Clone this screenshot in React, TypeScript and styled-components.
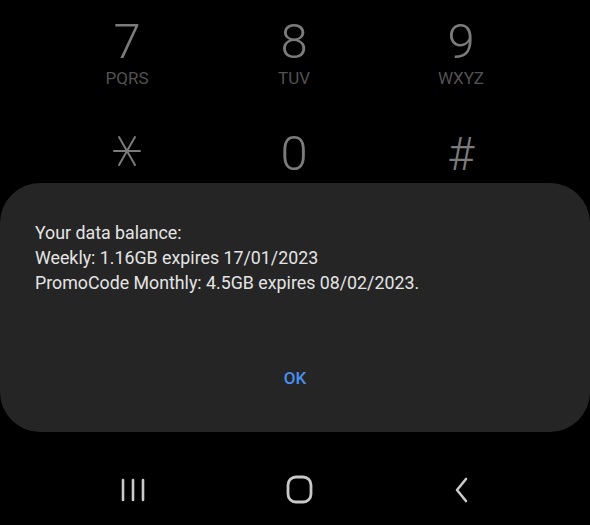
import React from "react";
import styled, { createGlobalStyle } from "styled-components";

const GlobalStyle = createGlobalStyle`
  html, body {
    margin: 0;
    padding: 0;
    background: #000;
  }
  body {
    font-family: Roboto, "Noto Sans", "Liberation Sans", sans-serif;
  }
`;

const Screen = styled.div`
  width: 590px;
  height: 525px;
  background: #000;
  display: flex;
  flex-direction: column;
  overflow: hidden;
`;

const Keypad = styled.div`
  height: 183px;
  display: grid;
  grid-template-columns: 254px 80px 254px;
  grid-template-rows: 112px 71px;
  overflow: hidden;
`;

const Key = styled.div`
  display: flex;
  flex-direction: column;
  align-items: center;
  padding-top: 17px;
`;

const Digit = styled.div`
  font-size: 49px;
  font-weight: 300;
  line-height: 50px;
  color: #7b7b7b;
`;

const Letters = styled.div`
  font-size: 17px;
  line-height: 18px;
  color: #525252;
  margin-top: 2px;
`;

const Symbol = styled.div`
  font-size: 46px;
  font-weight: 300;
  line-height: 50px;
  color: #7b7b7b;
`;

const Dialog = styled.div`
  height: 249px;
  background: #252525;
  border-radius: 40px;
  display: flex;
  flex-direction: column;
  box-sizing: border-box;
  padding: 37px 35px 0;
`;

const Message = styled.div`
  color: #e4e4e4;
  font-size: 17.8px;
  line-height: 25px;
  height: 142px;
`;

const OkButton = styled.button`
  align-self: center;
  border: none;
  background: transparent;
  color: #4a8ff0;
  font-family: inherit;
  font-size: 17px;
  font-weight: 500;
  padding: 6px 20px;
`;

const NavBar = styled.div`
  flex: 1;
  display: flex;
  align-items: center;
  justify-content: space-between;
  padding: 22px 118px 0 120px;
`;

const NavIcon = styled.svg`
  display: block;
`;

const Cell = styled.div`
  display: flex;
  justify-content: center;
`;

const keys = [
  { d: "7", l: "PQRS" },
  { d: "8", l: "TUV" },
  { d: "9", l: "WXYZ" },
];

export default function App() {
  return (
    <>
      <GlobalStyle />
      <Screen>
        <Keypad>
          {keys.map((k) => (
            <Cell key={k.d}>
              <Key>
                <Digit>{k.d}</Digit>
                <Letters>{k.l}</Letters>
              </Key>
            </Cell>
          ))}
          <Cell>
            <Key>
              <NavIcon width="34" height="50" viewBox="0 0 34 50">
                <g stroke="#7b7b7b" strokeWidth="2" strokeLinecap="round">
                  <line x1="4" y1="22" x2="30" y2="22" />
                  <line x1="9" y1="8" x2="25" y2="36" />
                  <line x1="25" y1="8" x2="9" y2="36" />
                </g>
              </NavIcon>
            </Key>
          </Cell>
          <Cell>
            <Key>
              <Digit>0</Digit>
            </Key>
          </Cell>
          <Cell>
            <Key>
              <Symbol>#</Symbol>
            </Key>
          </Cell>
        </Keypad>
        <Dialog>
          <Message>
            Your data balance:
            <br />
            Weekly: 1.16GB expires 17/01/2023
            <br />
            PromoCode Monthly: 4.5GB expires 08/02/2023.
          </Message>
          <OkButton>OK</OkButton>
        </Dialog>
        <NavBar>
          <NavIcon width="26" height="26" viewBox="0 0 26 26">
            <g stroke="#c9c9c9" strokeWidth="2.6" strokeLinecap="round">
              <line x1="3" y1="3" x2="3" y2="23" />
              <line x1="13" y1="3" x2="13" y2="23" />
              <line x1="23" y1="3" x2="23" y2="23" />
            </g>
          </NavIcon>
          <NavIcon width="27" height="29" viewBox="0 0 27 29">
            <rect
              x="2"
              y="2"
              width="23"
              height="25"
              rx="8"
              fill="none"
              stroke="#c9c9c9"
              strokeWidth="2.8"
            />
          </NavIcon>
          <NavIcon width="20" height="30" viewBox="0 0 20 30">
            <polyline
              points="14,4 5,15 14,26"
              fill="none"
              stroke="#c9c9c9"
              strokeWidth="2.6"
              strokeLinecap="round"
              strokeLinejoin="round"
            />
          </NavIcon>
        </NavBar>
      </Screen>
    </>
  );
}
